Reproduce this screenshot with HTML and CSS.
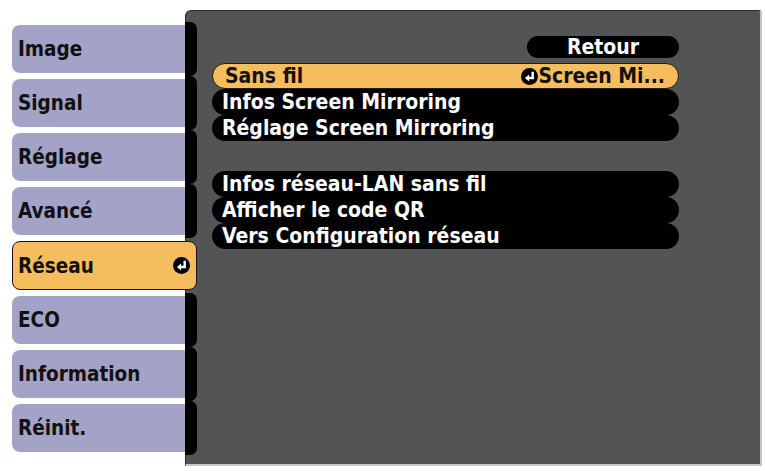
FILE: index.html
```html
<!DOCTYPE html>
<html>
<head>
<meta charset="utf-8">
<link rel="stylesheet" href="styles.css">
</head>
<body>
<div class="screen">
  <div class="tabs">
    <div class="tab">Image</div>
    <div class="tab">Signal</div>
    <div class="tab">Réglage</div>
    <div class="tab">Avancé</div>
    <div class="tab tab-active">Réseau
      <svg class="enter" width="17" height="17" viewBox="0 0 16 16"><circle cx="8" cy="8" r="8" fill="#000"/><path d="M11 3.6V9.4H7" fill="none" stroke="#fff" stroke-width="2.3"/><polygon points="3.6,9.4 7.6,6.2 7.6,12.6" fill="#fff"/></svg>
    </div>
    <div class="tab">ECO</div>
    <div class="tab">Information</div>
    <div class="tab">Réinit.</div>
  </div>
  <div class="panel">
    <div class="content">
      <div class="back">Retour</div>
      <div class="group">
        <div class="row row-active"><span>Sans fil</span>
          <span class="value"><svg class="enter" width="17" height="17" viewBox="0 0 16 16"><circle cx="8" cy="8" r="8" fill="#000"/><path d="M11 3.6V9.4H7" fill="none" stroke="#fff" stroke-width="2.3"/><polygon points="3.6,9.4 7.6,6.2 7.6,12.6" fill="#fff"/></svg>Screen Mi...</span></div>
        <div class="row">Infos Screen Mirroring</div>
        <div class="row">Réglage Screen Mirroring</div>
      </div>
      <div class="group group-2">
        <div class="row">Infos réseau-LAN sans fil</div>
        <div class="row">Afficher le code QR</div>
        <div class="row">Vers Configuration réseau</div>
      </div>
    </div>
  </div>
</div>
</body>
</html>
```
FILE: styles.css
```css
html, body {
  margin: 0;
  padding: 0;
  background: #fff;
  width: 765px;
  height: 471px;
  overflow: hidden;
}
.screen {
  display: flex;
  padding: 10px 0 0 12px;
  font-family: "DejaVu Sans Condensed", "DejaVu Sans", Verdana, sans-serif;
  font-stretch: condensed;
  font-weight: bold;
}
.tabs {
  width: 173px;
  margin-top: 15px;
  display: flex;
  flex-direction: column;
  gap: 6px;
  position: relative;
  z-index: 2;
}
.tab {
  position: relative;
  height: 48px;
  box-sizing: border-box;
  background: #a3a2c7;
  border-radius: 8px 0 0 8px;
  color: #111;
  font-size: 20.5px;
  display: flex;
  align-items: center;
  padding-left: 6px;
}
.tab::after {
  content: "";
  position: absolute;
  left: 173px;
  top: -3px;
  width: 12px;
  height: 54px;
  background: #000;
  border-radius: 0 7px 7px 0;
}
.tab-active {
  width: 185px;
  height: 49px;
  background: #f6bd5e;
  border: 1px solid #1a1206;
  border-radius: 8px;
  padding-left: 5px;
  justify-content: space-between;
  padding-right: 6px;
}
.tab-active::after {
  display: none;
}
.panel {
  width: 577px;
  height: 456px;
  box-sizing: border-box;
  background: #535455;
  border-top: 1px solid #2a2a2a;
  border-left: 1px solid #2a2a2a;
  border-right: 2px solid #c6c6c6;
  border-bottom: 2px solid #c6c6c6;
  border-radius: 6px 3px 0 0;
  position: relative;
  z-index: 1;
}
.content {
  margin-left: 26px;
  width: 467px;
  display: flex;
  flex-direction: column;
}
.back {
  align-self: flex-end;
  width: 152px;
  height: 22px;
  margin-top: 25px;
  background: #000;
  border-radius: 11px;
  color: #fff;
  font-size: 21px;
  line-height: 22px;
  text-align: center;
}
.group {
  margin-top: 5px;
  display: flex;
  flex-direction: column;
}
.group-2 {
  margin-top: 30px;
}
.row {
  height: 26px;
  box-sizing: border-box;
  background: #000;
  border-radius: 13px;
  color: #fff;
  font-size: 21px;
  line-height: 26px;
  padding-left: 10px;
  display: flex;
  align-items: center;
  justify-content: space-between;
}
.row-active {
  background: #f6bd5e;
  color: #111;
  border: 1px solid #2a1c08;
  padding-left: 12px;
  padding-right: 13px;
}
.value {
  display: flex;
  align-items: center;
}
.enter {
  display: block;
}
```
